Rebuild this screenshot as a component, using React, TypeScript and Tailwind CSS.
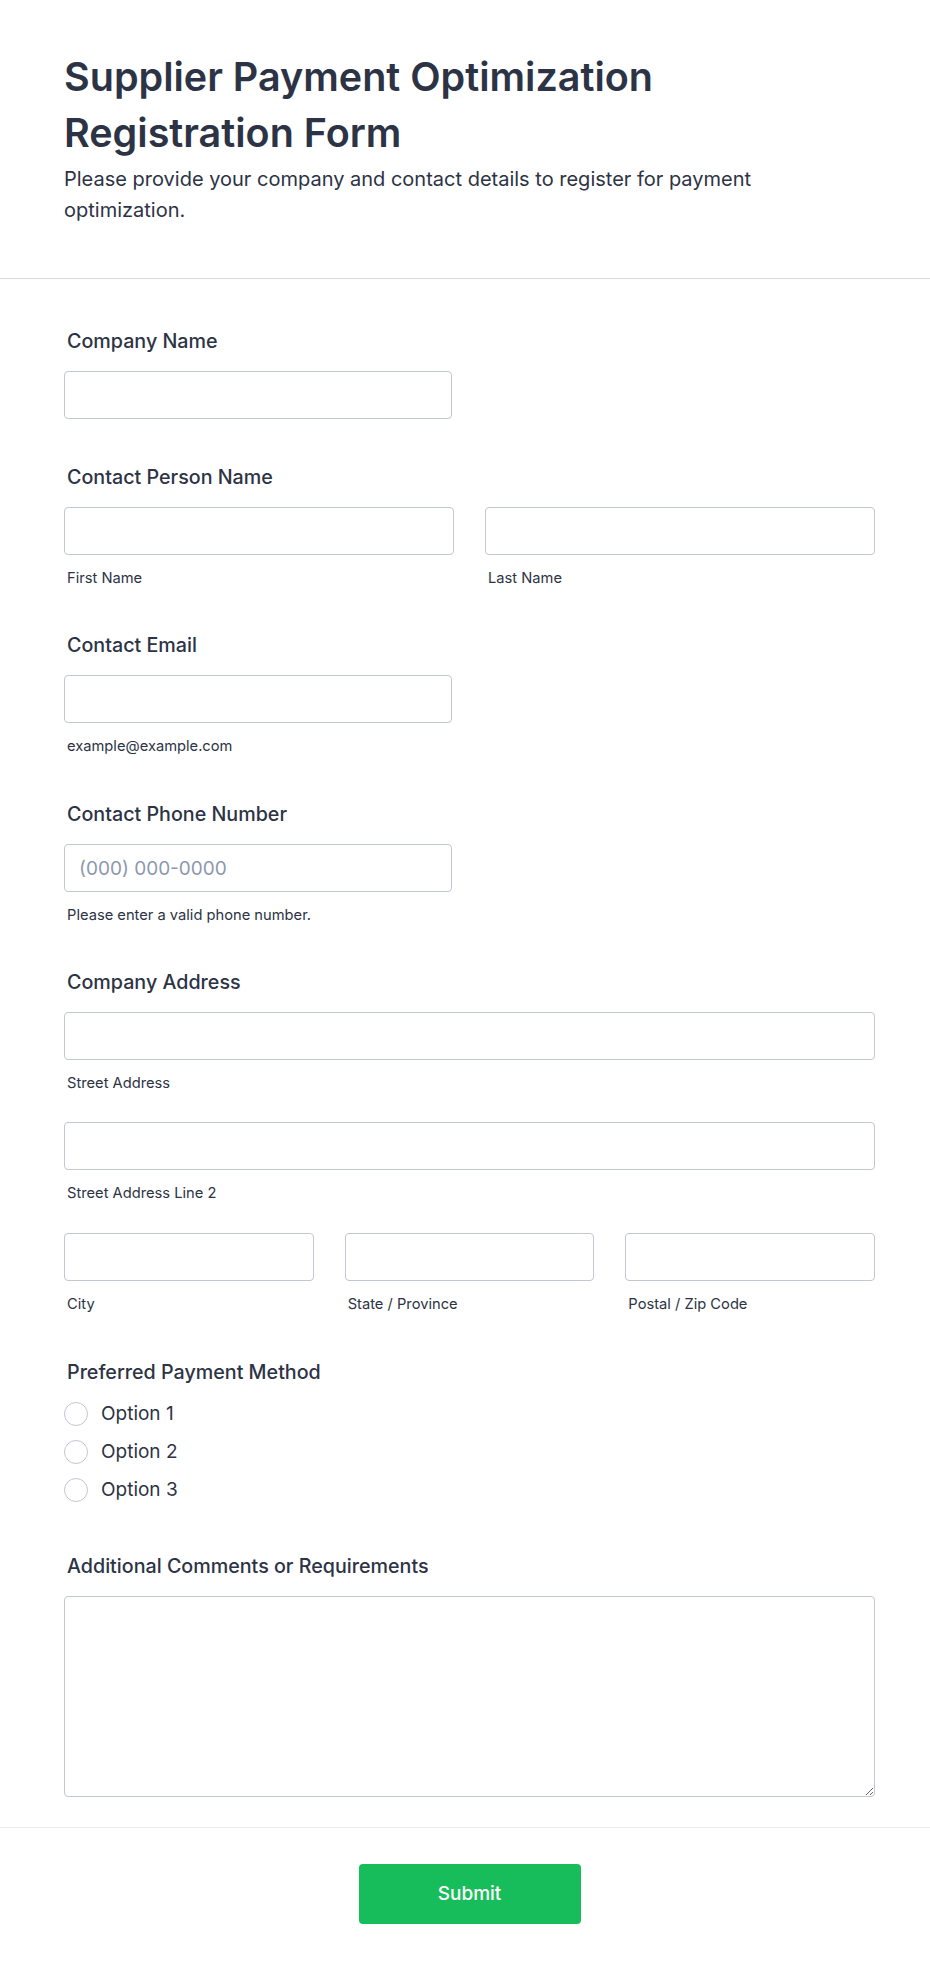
import React from 'react';

const inputCls =
  'block w-full h-12 rounded-[4px] border border-[#c3c6d4] bg-white px-[14px] text-[19px] text-[#2c3345] placeholder:text-[#8d98ad] outline-none';

const Label = ({ children }: { children: React.ReactNode }) => (
  <div className="pl-[3px] mb-[18px] text-[19.7px] leading-6 font-medium text-[#2c3345]">{children}</div>
);

const Sub = ({ children }: { children: React.ReactNode }) => (
  <div className="pl-[3px] mt-3 text-[14.7px] leading-[22px] text-[#2c3345]">{children}</div>
);

const App: React.FC = () => {
  return (
    <div className="min-h-[1974px] bg-white text-[#2c3345]" style={{ fontFamily: 'Inter, "Noto Sans", sans-serif' }}>
      {/* Header */}
      <div className="border-b border-[#d8dae9] pl-16 pr-[55px] pt-[49px] pb-[52px]">
        <h1 className="text-[39.5px] leading-[56px] font-semibold text-[#2c3345]">
          Supplier Payment Optimization
          <br />
          Registration Form
        </h1>
        <p className="mt-[3px] max-w-[760px] text-[20px] leading-[31px] text-[#2c3345]">
          Please provide your company and contact details to register for payment optimization.
        </p>
      </div>

      {/* Fields */}
      <div className="pl-16 pr-[55px] pt-[50px] pb-[30px] border-b border-[#eceef5]">
        <div>
          <Label>Company Name</Label>
          <div className="w-[388px]">
            <input className={inputCls} />
          </div>
        </div>

        <div className="mt-[46px]">
          <Label>Contact Person Name</Label>
          <div className="grid grid-cols-2 gap-[31px]">
            <div>
              <input className={inputCls} />
              <Sub>First Name</Sub>
            </div>
            <div>
              <input className={inputCls} />
              <Sub>Last Name</Sub>
            </div>
          </div>
        </div>

        <div className="mt-[44px]">
          <Label>Contact Email</Label>
          <div className="w-[388px]">
            <input className={inputCls} />
            <Sub>example@example.com</Sub>
          </div>
        </div>

        <div className="mt-[45px]">
          <Label>Contact Phone Number</Label>
          <div className="w-[388px]">
            <input className={inputCls} placeholder="(000) 000-0000" />
            <Sub>Please enter a valid phone number.</Sub>
          </div>
        </div>

        <div className="mt-[44px]">
          <Label>Company Address</Label>
          <input className={inputCls} />
          <Sub>Street Address</Sub>
          <div className="mt-[28px]">
            <input className={inputCls} />
            <Sub>Street Address Line 2</Sub>
          </div>
          <div className="mt-[29px] grid grid-cols-3 gap-[31px]">
            <div>
              <input className={inputCls} />
              <Sub>City</Sub>
            </div>
            <div>
              <input className={inputCls} />
              <Sub>State / Province</Sub>
            </div>
            <div>
              <input className={inputCls} />
              <Sub>Postal / Zip Code</Sub>
            </div>
          </div>
        </div>

        <div className="mt-[45px]">
          <Label>Preferred Payment Method</Label>
          <div className="mt-[2px] flex flex-col gap-[14px]">
            {['Option 1', 'Option 2', 'Option 3'].map((o) => (
              <label key={o} className="flex items-center gap-[13px] h-6">
                <span className="w-6 h-6 rounded-full border-[1.5px] border-[#c3c6d4] bg-white" />
                <span className="text-[19px] leading-6 text-[#2c3345]">{o}</span>
              </label>
            ))}
          </div>
        </div>

        <div className="mt-[52px]">
          <Label>Additional Comments or Requirements</Label>
          <textarea className="block w-full h-[201px] rounded-[4px] border border-[#c3c6d4] bg-white outline-none" />
        </div>
      </div>

      {/* Footer */}
      <div className="pl-16 pr-[55px] pt-9 pb-[50px] flex justify-center">
        <button className="w-[222px] h-[60px] rounded-[4px] bg-[#18bd5b] text-white text-[19px] font-medium">
          Submit
        </button>
      </div>
    </div>
  );
};

export default App;
